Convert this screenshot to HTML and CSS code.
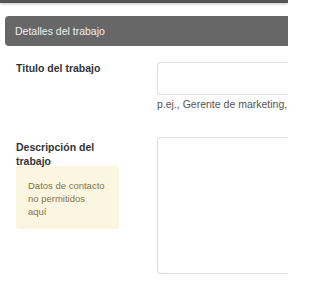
FILE: index.html
```html
<!DOCTYPE html>
<html lang="es">
<head>
<meta charset="utf-8">
<title>Detalles del trabajo</title>
<link rel="stylesheet" href="styles.css">
</head>
<body>
<div class="topbar"></div>
<div class="panel">
  <div class="panel-heading">Detalles del trabajo</div>
  <div class="form">
    <div class="row row-title">
      <label class="label label-title">Titulo del trabajo</label>
      <div class="field">
        <div class="input"></div>
        <div class="help">p.ej., Gerente de marketing,</div>
      </div>
    </div>
    <div class="row row-desc">
      <div class="label-col">
        <label class="label">Descripción del trabajo</label>
        <div class="notice">Datos de contacto<br>no permitidos<br>aquí</div>
      </div>
      <div class="field">
        <div class="textarea"></div>
      </div>
    </div>
  </div>
</div>
</body>
</html>
```

FILE: styles.css
```css
html, body {
  margin: 0;
  padding: 0;
  background: #ffffff;
  font-family: "Liberation Sans", Arial, sans-serif;
}

body {
  width: 288px;
  height: 288px;
  overflow: hidden;
}

.topbar {
  height: 3px;
  background: #555555;
  box-shadow: 0 1px 3px rgba(0, 0, 0, 0.25);
}

.panel {
  padding: 13px 0 0 5px;
  overflow: hidden;
}

.panel-heading {
  height: 30px;
  line-height: 30px;
  background: #676767;
  border-radius: 4px 0 0 4px;
  padding-left: 10px;
  color: #f0f0f0;
  font-size: 10.5px;
  white-space: nowrap;
}

.form {
  padding-left: 11px;
}

.row {
  display: flex;
  gap: 37px;
  align-items: flex-start;
}

.row-title {
  margin-top: 16px;
}

.row-desc {
  margin-top: 26px;
}

.label-col {
  width: 104px;
  flex: none;
}

.label {
  display: block;
  width: 104px;
  flex: none;
  font-size: 10.5px;
  line-height: 14px;
  font-weight: bold;
  color: #333333;
}

.label-title {
  margin-top: -1px;
}

.row-desc .label {
  padding-top: 3px;
}

.field {
  flex: 1;
  min-width: 0;
  margin-right: -6px;
}

.input {
  height: 31px;
  border: 1px solid #dedede;
  border-right: none;
  border-radius: 3px 0 0 3px;
  background: #ffffff;
}

.help {
  margin-top: 3px;
  font-size: 10.5px;
  line-height: 13px;
  color: #555555;
  white-space: nowrap;
}

.textarea {
  height: 135px;
  border: 1px solid #dedede;
  border-right: none;
  border-radius: 4px 0 0 4px;
  background: #ffffff;
  box-shadow: 0 1px 1px rgba(0, 0, 0, 0.04);
}

.notice {
  margin-top: -2px;
  width: 103px;
  box-sizing: border-box;
  padding: 12.7px 6px 10px 12px;
  background: #fcf5e0;
  border-radius: 3px;
  color: #85764e;
  font-size: 9.5px;
  line-height: 13.3px;
}
```
